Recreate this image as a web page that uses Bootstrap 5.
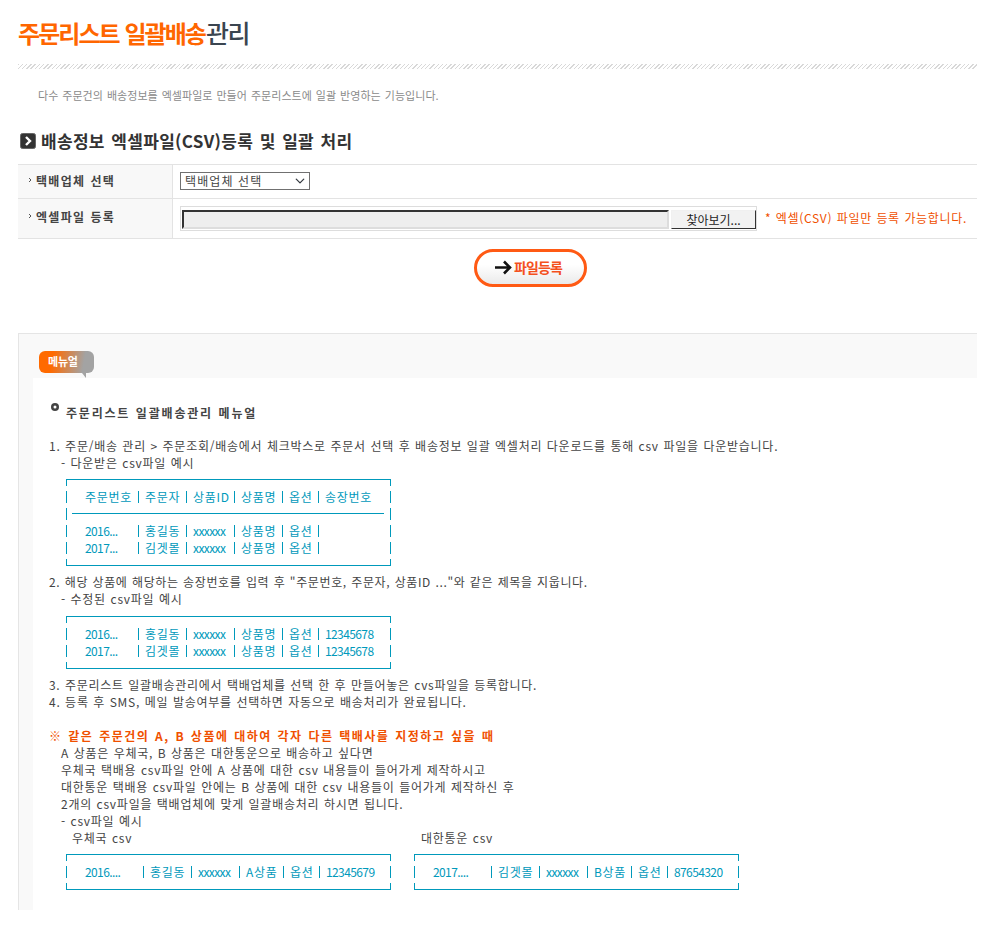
<!DOCTYPE html>
<html lang="ko">
<head>
<meta charset="UTF-8">
<title>주문리스트 일괄배송 관리</title>
<link href="https://cdn.jsdelivr.net/npm/bootstrap@5.3.2/dist/css/bootstrap.min.css" rel="stylesheet">
<style>
body { margin: 0; background: #fff; color: #444; font: 12px/17px "Noto Sans CJK KR", "Liberation Sans", sans-serif; letter-spacing: .75px; word-spacing: .5px; }
.page-wrap { width: 959px; margin-left: 18px; height: 942px; overflow: hidden; }
.page-title { height: 64px; margin: 0; padding-top: 15px; font-size: 24px; line-height: 34px; font-weight: 700; letter-spacing: -1.95px; word-spacing: 1px; color: #ff6600; }
.page-title span { font-size: 25px; font-weight: 500; letter-spacing: -1.4px; color: #3a4550; margin-left: 1px; }
.hatch { height: 5px; background: repeating-linear-gradient(135deg, #d8d8d8 0 1px, #fff 1px 3px); }
.page-desc { margin: 18px 0 0 20px; color: #8a8a8a; font-size: 11px; letter-spacing: .05px; word-spacing: .8px; }
.section-head { margin-top: 26px; height: 21px; gap: 5px; font-size: 17px; line-height: 21px; font-weight: 700; color: #333; letter-spacing: .3px; word-spacing: 1.5px; }
.form-rows { margin-top: 13px; border-top: 1px solid #e3e3e3; }
.form-line { border-bottom: 1px solid #e3e3e3; }
.line-a { height: 34px; }
.line-b { height: 40px; }
.line-label { width: 155px; flex: none; gap: 4px; padding: 0 0 3px 10px; background: #f8f8f8; border-right: 1px solid #e3e3e3; font-weight: 700; color: #444; letter-spacing: 1.3px; }
.line-b .line-label { padding-bottom: 5px; }
.line-body { padding-left: 7px; }
.courier-select { width: 130px; height: 18px; margin-top: -2px; padding: 0 0 0 4px; border: 1px solid #707070; border-radius: 0; color: #444; font-size: 12px; line-height: 16px; letter-spacing: 1.1px; background-size: 14px 10px; background-position: right 2px center; }
.file-box { width: 577px; height: 25px; padding: 3px 0 0 1px; gap: 2px; border: 1px solid #ddd; }
.file-path { width: 487px; height: 19px; border-top: 2px solid #333; border-left: 2px solid #333; border-right: 2px solid #ddd; border-bottom: 2px solid #ddd; background: #eee; }
.file-btn { width: 85px; height: 19px; padding: 0; border: 1px solid #f0f0f0; border-right-color: #333; border-bottom-color: #333; border-radius: 0; background: #f2f2f2; color: #222; font-size: 12px; line-height: 17px; }
.file-note { margin: -2px 0 0 8px; color: #f05000; letter-spacing: .68px; }
.submit-row { margin-top: 10px; padding-left: 456px; height: 38px; }
.submit-btn { width: 113px; height: 38px; gap: 2px; padding: 0 4px 1px 0; border: 3px solid #ff5a14; background: linear-gradient(#fff 40%, #eaeaea); color: #f4511e; font-size: 14px; font-weight: 700; letter-spacing: -.9px; }
.manual-box { margin-top: 46px; height: 577px; padding: 44px 0 0 14px; background: #f9f9f9; border-top: 1px solid #e5e5e5; border-left: 1px solid #e5e5e5; }
.manual-tag { position: absolute; left: 20px; top: 17px; width: 55px; height: 22px; padding-left: 9px; border-radius: 6px; background: linear-gradient(100deg, #ff6a00 25%, #a3a3a3 80%); color: #fff; font-size: 11px; line-height: 21px; font-weight: 700; letter-spacing: -.2px; }
.manual-tag::after { content: ""; position: absolute; left: 43px; top: 22px; border-top: 5px solid #a3a3a3; border-left: 4px solid transparent; }
.manual-body { height: 100%; padding: 23px 0 0 16px; background: #fff; }
.manual-head { height: 22px; gap: 7px; margin-left: 2px; font-weight: 700; color: #444; letter-spacing: 1.8px; }
.manual-head svg { margin-top: -10px; }
.step-text { margin: 0; }
.step-first { margin-top: 14px; }
.step-next { margin-top: 7px; }
.step-tight { letter-spacing: .62px; }
.step-snug { letter-spacing: .71px; }
.indent-text { padding-left: 12px; }
.csv-box { width: 325px; padding: 8px 0 0 19px; border: 1px solid #0099bb; border-width: 1px 0; color: #0099bb; margin-left: 17px;
  background-image: linear-gradient(#0099bb 0 12px, transparent 12px), linear-gradient(#0099bb 0 12px, transparent 12px);
  background-size: 1px 17px; background-origin: border-box; background-position: 0 -5px, 100% -5px; background-repeat: repeat-y; }
.box-tall { height: 87px; margin-top: 8px; }
.box-mid { height: 53px; margin-top: 9px; }
.box-low { height: 36px; }
.csv-row { display: grid; height: 17px; align-items: center; line-height: 12px; letter-spacing: .7px; grid-template-columns: 53px 48px 48px 48px 36px 1fr; }
.csv-row span + span { padding-left: 6px; border-left: 1px solid #0099bb; white-space: nowrap; }
.csv-row .csv-num { letter-spacing: -.6px; }
.csv-row-wide { grid-template-columns: 58px 48px 48px 44px 36px 1fr; }
.csv-rule { height: 17px; margin-left: -13px; width: 312px; background: linear-gradient(#0099bb, #0099bb) 0 8px / 100% 1px no-repeat; }
.warn-title { margin: 17px 0 0; font-weight: 700; color: #f05000; letter-spacing: 1.47px; word-spacing: 1px; }
.csv-pair { gap: 23px; margin-top: 8px; }
.csv-pair > .csv-box + .csv-box { margin-left: 0; }
.csv-caption { margin-left: 23px; }
.csv-caption span { width: 349px; }
</style>
</head>
<body>
<div class="page-wrap">
  <h1 class="page-title">주문리스트 일괄배송<span>관리</span></h1>
  <div class="hatch"></div>
  <p class="page-desc">다수 주문건의 배송정보를 엑셀파일로 만들어 주문리스트에 일괄 반영하는 기능입니다.</p>

  <div class="section-head d-flex align-items-center">
    <svg width="18" height="16" viewBox="0 0 18 16"><rect x="2.5" y=".5" width="15" height="15" rx="2" fill="#333" stroke="#666"/><path d="M8 4l4 4-4 4" fill="none" stroke="#fff" stroke-width="2.4"/></svg>
    <span>배송정보 엑셀파일(CSV)등록 및 일괄 처리</span>
  </div>

  <div class="form-rows">
    <div class="form-line line-a d-flex">
      <div class="line-label d-flex align-items-center">
        <svg width="4" height="6" viewBox="0 0 4 6"><path d="M1 1l2 2-2 2" fill="none" stroke="#555"/></svg>
        택배업체 선택
      </div>
      <div class="line-body d-flex align-items-center">
        <select class="form-select courier-select"><option>택배업체 선택</option></select>
      </div>
    </div>
    <div class="form-line line-b d-flex">
      <div class="line-label d-flex align-items-center">
        <svg width="4" height="6" viewBox="0 0 4 6"><path d="M1 1l2 2-2 2" fill="none" stroke="#555"/></svg>
        엑셀파일 등록
      </div>
      <div class="line-body d-flex align-items-center">
        <div class="file-box d-flex">
          <div class="file-path"></div>
          <button type="button" class="btn file-btn">찾아보기...</button>
        </div>
        <span class="file-note">* 엑셀(CSV) 파일만 등록 가능합니다.</span>
      </div>
    </div>
  </div>

  <div class="submit-row d-flex">
    <button type="button" class="btn rounded-pill submit-btn d-flex align-items-center justify-content-center">
      <svg width="17" height="15" viewBox="0 0 17 15"><path d="M0 7.5h14M9 1.5l6 6-6 6" fill="none" stroke="#111" stroke-width="2.6"/></svg>
      파일등록
    </button>
  </div>

  <div class="manual-box position-relative">
    <div class="manual-tag">메뉴얼</div>
    <div class="manual-body">
      <div class="manual-head d-flex align-items-center">
        <svg width="8" height="8" viewBox="0 0 8 8"><circle cx="4" cy="4" r="4" fill="#444"/><circle cx="4" cy="4" r="1.5" fill="#fff"/></svg>
        <span>주문리스트 일괄배송관리 메뉴얼</span>
      </div>
      <p class="step-text step-first">1. 주문/배송 관리 &gt; 주문조회/배송에서 체크박스로 주문서 선택 후 배송정보 일괄 엑셀처리 다운로드를 통해 csv 파일을 다운받습니다.</p>
      <p class="step-text indent-text">- 다운받은 csv파일 예시</p>
      <div class="csv-box box-tall">
        <div class="csv-row"><span>주문번호</span><span>주문자</span><span>상품ID</span><span>상품명</span><span>옵션</span><span>송장번호</span></div>
        <div class="csv-rule"></div>
        <div class="csv-row"><span class="csv-num">2016...</span><span>홍길동</span><span class="csv-num">xxxxxx</span><span>상품명</span><span>옵션</span><span>&nbsp;</span></div>
        <div class="csv-row"><span class="csv-num">2017...</span><span>김겟몰</span><span class="csv-num">xxxxxx</span><span>상품명</span><span>옵션</span><span>&nbsp;</span></div>
      </div>
      <p class="step-text step-next step-tight">2. 해당 상품에 해당하는 송장번호를 입력 후 "주문번호, 주문자, 상품ID ..."와 같은 제목을 지웁니다.</p>
      <p class="step-text indent-text">- 수정된 csv파일 예시</p>
      <div class="csv-box box-mid">
        <div class="csv-row"><span class="csv-num">2016...</span><span>홍길동</span><span class="csv-num">xxxxxx</span><span>상품명</span><span>옵션</span><span class="csv-num">12345678</span></div>
        <div class="csv-row"><span class="csv-num">2017...</span><span>김겟몰</span><span class="csv-num">xxxxxx</span><span>상품명</span><span>옵션</span><span class="csv-num">12345678</span></div>
      </div>
      <p class="step-text step-next step-snug">3. 주문리스트 일괄배송관리에서 택배업체를 선택 한 후 만들어놓은 cvs파일을 등록합니다.</p>
      <p class="step-text">4. 등록 후 SMS, 메일 발송여부를 선택하면 자동으로 배송처리가 완료됩니다.</p>
      <p class="warn-title">※ 같은 주문건의 A, B 상품에 대하여 각자 다른 택배사를 지정하고 싶을 때</p>
      <p class="step-text indent-text">A 상품은 우체국, B 상품은 대한통운으로 배송하고 싶다면</p>
      <p class="step-text indent-text">우체국 택배용 csv파일 안에 A 상품에 대한 csv 내용들이 들어가게 제작하시고</p>
      <p class="step-text indent-text">대한통운 택배용 csv파일 안에는 B 상품에 대한 csv 내용들이 들어가게 제작하신 후</p>
      <p class="step-text indent-text">2개의 csv파일을 택배업체에 맞게 일괄배송처리 하시면 됩니다.</p>
      <p class="step-text indent-text">- csv파일 예시</p>
      <div class="csv-caption d-flex"><span>우체국 csv</span><span>대한통운 csv</span></div>
      <div class="csv-pair d-flex">
        <div class="csv-box box-low"><div class="csv-row csv-row-wide"><span class="csv-num">2016....</span><span>홍길동</span><span class="csv-num">xxxxxx</span><span>A상품</span><span>옵션</span><span class="csv-num">12345679</span></div></div>
        <div class="csv-box box-low"><div class="csv-row csv-row-wide"><span class="csv-num">2017....</span><span>김겟몰</span><span class="csv-num">xxxxxx</span><span>B상품</span><span>옵션</span><span class="csv-num">87654320</span></div></div>
      </div>
    </div>
  </div>
</div>
<script src="https://cdn.jsdelivr.net/npm/bootstrap@5.3.2/dist/js/bootstrap.bundle.min.js"></script>
</body>
</html>
